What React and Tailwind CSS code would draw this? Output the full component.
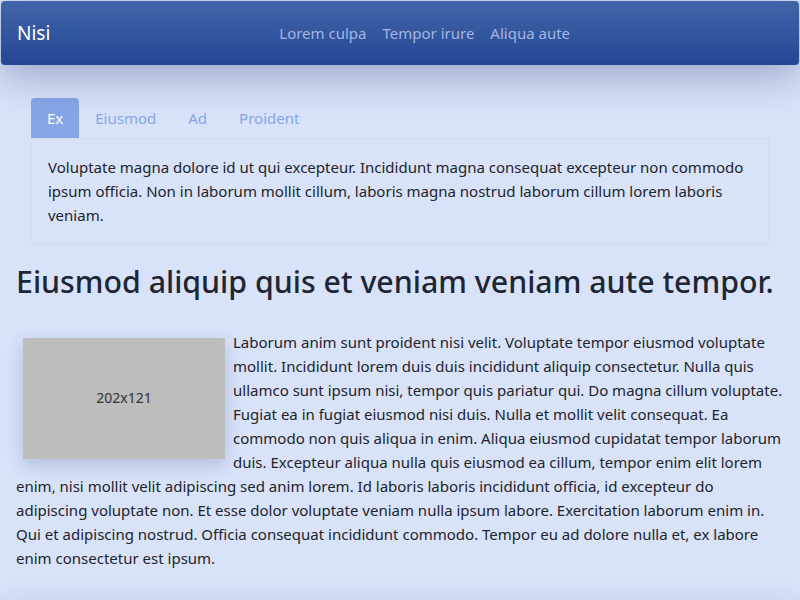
export default function App() {
  return (
    <div className="min-h-[600px] bg-[#d8e2f9] text-[#212529] overflow-hidden" style={{ fontFamily: '"Noto Sans", sans-serif' }}>
      <nav className="mx-px mt-px h-16 rounded bg-gradient-to-b from-[#4265a9] to-[#244796] flex items-center px-4 shadow-[0_10px_40px_rgba(30,50,100,0.35)] relative z-10">
        <span className="text-white text-[19px] leading-none">Nisi</span>
        <ul className="mx-auto flex text-[15px] text-[#a3b5e2] pl-[16px]">
          <li className="px-2">Lorem culpa</li>
          <li className="px-2">Tempor irure</li>
          <li className="px-2">Aliqua aute</li>
        </ul>
      </nav>
      <div className="px-[31px] pt-[33px]">
        <div className="flex text-[15px]">
          <span className="h-10 px-4 flex items-center rounded-t bg-[#87a6e8] text-white">Ex</span>
          <span className="h-10 px-4 flex items-center text-[#87a6e8]">Eiusmod</span>
          <span className="h-10 px-4 flex items-center text-[#87a6e8]">Ad</span>
          <span className="h-10 px-4 flex items-center text-[#87a6e8]">Proident</span>
        </div>
        <div className="border border-[#d3dbec] px-4 py-4 text-[15px] leading-6">
          Voluptate magna dolore id ut qui excepteur. Incididunt magna consequat excepteur non commodo ipsum officia. Non in laborum mollit cillum, laboris magna nostrud laborum cillum lorem laboris veniam.
        </div>
      </div>
      <div className="px-4">
        <h1 className="text-[30.3px] font-medium leading-tight mt-[19px] mb-[29px] text-[#1f2633]">Eiusmod aliquip quis et veniam veniam aute tempor.</h1>
        <div className="text-[15px] leading-6">
          <div className="float-left w-[202px] h-[121px] ml-[7px] mr-2 mt-2 bg-[#bdbdbd] flex items-center justify-center text-[#333] text-[14px] shadow-[0_6px_16px_rgba(60,80,130,0.25)]">202x121</div>
          <p>
            Laborum anim sunt proident nisi velit. Voluptate tempor eiusmod voluptate mollit. Incididunt lorem duis duis incididunt aliquip consectetur. Nulla quis ullamco sunt ipsum nisi, tempor quis pariatur qui. Do magna cillum voluptate. Fugiat ea in fugiat eiusmod nisi duis. Nulla et mollit velit consequat. Ea commodo non quis aliqua in enim. Aliqua eiusmod cupidatat tempor laborum duis. Excepteur aliqua nulla quis eiusmod ea cillum, tempor enim elit lorem enim, nisi mollit velit adipiscing sed anim lorem. Id laboris laboris incididunt officia, id excepteur do adipiscing voluptate non. Et esse dolor voluptate veniam nulla ipsum labore. Exercitation laborum enim in. Qui et adipiscing nostrud. Officia consequat incididunt commodo. Tempor eu ad dolore nulla et, ex labore enim consectetur est ipsum.
          </p>
        </div>
      </div>
      <footer className="mt-[44px] h-16 bg-[#d8e2f9] shadow-[0_-8px_30px_rgba(30,50,100,0.14)]"></footer>
    </div>
  );
}
